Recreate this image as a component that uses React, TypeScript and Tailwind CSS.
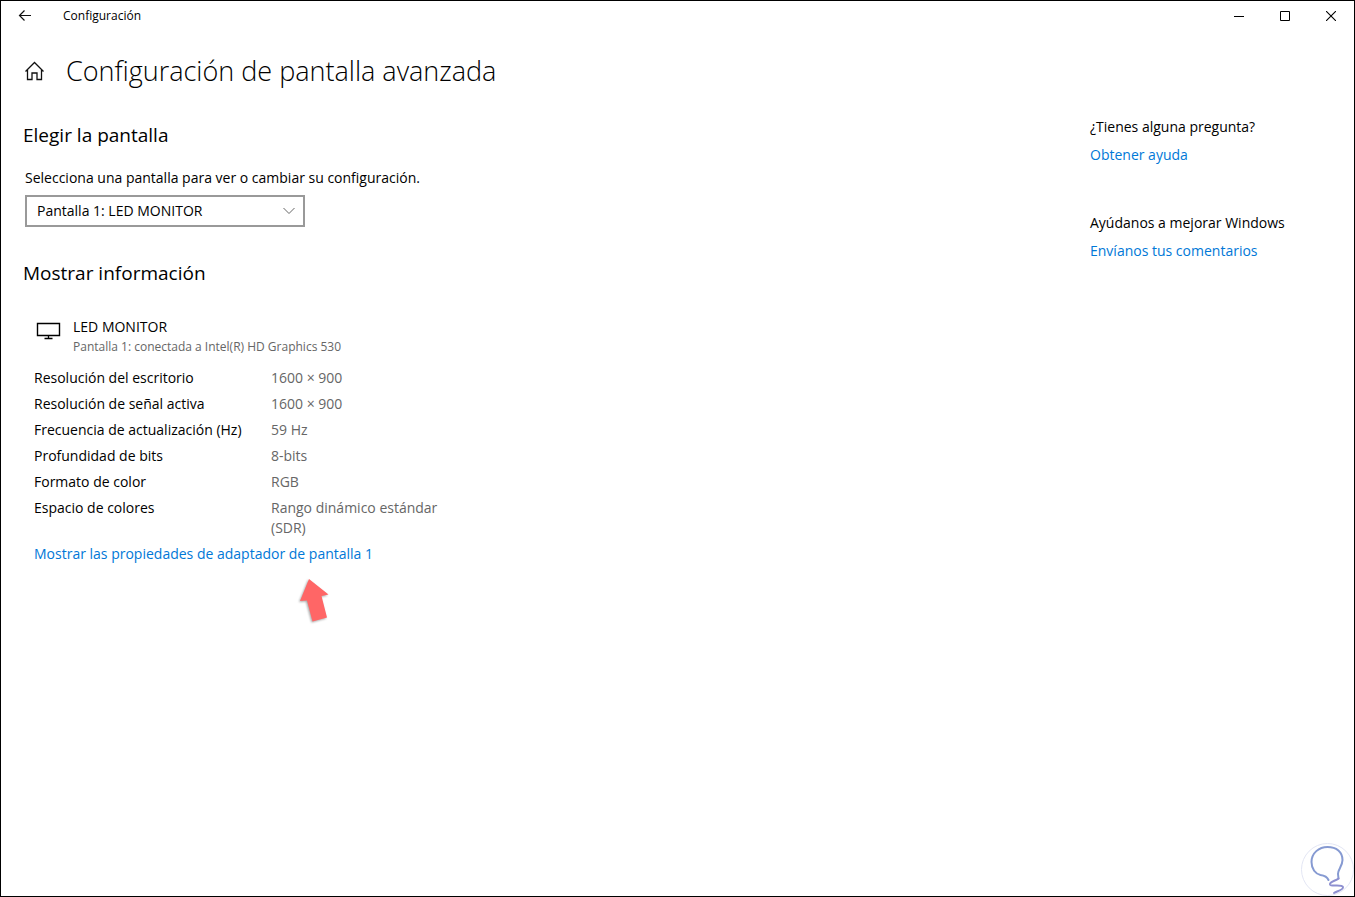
import { useState } from "react";

const DISPLAY_INFO = [
  { label: "Resolución del escritorio", value: "1600 × 900" },
  { label: "Resolución de señal activa", value: "1600 × 900" },
  { label: "Frecuencia de actualización (Hz)", value: "59 Hz" },
  { label: "Profundidad de bits", value: "8-bits" },
  { label: "Formato de color", value: "RGB" },
  { label: "Espacio de colores", value: "Rango dinámico estándar (SDR)" },
];

const LINK = "text-[#0078d7] hover:text-gray-500";

function TitleBar() {
  return (
    <header className="flex h-[30px] items-center justify-between">
      <div className="flex h-full items-center">
        <button type="button" aria-label="Atrás" className="flex h-full w-12 items-center justify-center">
          <svg width="14" height="12" viewBox="0 0 14 12" fill="none" stroke="#111" strokeWidth="1.2">
            <path d="M13 5.5H1.5M6.5.5l-5 5 5 5" />
          </svg>
        </button>
        <span className="ml-3.5 text-xs">Configuración</span>
      </div>
      <div className="flex h-full">
        <button type="button" aria-label="Minimizar" className="flex h-full w-[46px] items-center justify-center">
          <svg width="10" height="10" viewBox="0 0 10 10" stroke="#000">
            <path d="M0 5.5h10" />
          </svg>
        </button>
        <button type="button" aria-label="Maximizar" className="flex h-full w-[46px] items-center justify-center">
          <svg width="10" height="10" viewBox="0 0 10 10" fill="none" stroke="#000">
            <path d="M.5.5h9v9h-9z" />
          </svg>
        </button>
        <button type="button" aria-label="Cerrar" className="flex h-full w-[46px] items-center justify-center">
          <svg width="10" height="10" viewBox="0 0 10 10" stroke="#000" strokeWidth="1.1">
            <path d="M0 0l10 10M10 0L0 10" />
          </svg>
        </button>
      </div>
    </header>
  );
}

function DisplaySelect() {
  const [display, setDisplay] = useState("1");

  return (
    <div className="pl-0.5">
      <label htmlFor="display" className="block leading-5">
        Selecciona una pantalla para ver o cambiar su configuración.
      </label>
      <div className="relative mt-[7px] w-[280px]">
        <select
          id="display"
          value={display}
          onChange={(e) => setDisplay(e.target.value)}
          className="block h-8 w-full appearance-none border-2 border-[#999] bg-white pl-2.5 pr-8"
        >
          <option value="1">Pantalla 1: LED MONITOR</option>
        </select>
        <svg
          className="pointer-events-none absolute right-2.5 top-3"
          width="12"
          height="8"
          viewBox="0 0 12 8"
          fill="none"
          stroke="#666"
        >
          <path d="M.5 1L6 6.5 11.5 1" />
        </svg>
      </div>
    </div>
  );
}

function DisplayInfo() {
  return (
    <div className="pl-[11px]">
      <div className="flex gap-3 pl-0.5">
        <svg className="mt-1" width="25" height="20" viewBox="0 0 25 20" fill="none" stroke="#000">
          <path d="M1.500 2.500h22v12h-22z" strokeWidth="1.4" />
          <path d="M12.500 14.500v3M8.500 17.500h8" strokeWidth="1.3" />
        </svg>
        <div>
          <div className="leading-5">LED MONITOR</div>
          <div className="text-xs leading-5 text-[#666]">
            Pantalla 1: conectada a Intel(R) HD Graphics 530
          </div>
        </div>
      </div>

      <table className="mt-[11px] w-[430px] table-fixed text-left">
        <tbody>
          {DISPLAY_INFO.map((row) => (
            <tr key={row.label} className="align-top leading-5">
              <th scope="row" className="w-[237px] pb-1.5 font-normal">{row.label}</th>
              <td className="pb-1.5 text-[#666]">{row.value}</td>
            </tr>
          ))}
        </tbody>
      </table>

      <a href="#adapter" className={`block w-fit leading-5 ${LINK}`}>
        Mostrar las propiedades de adaptador de pantalla 1
      </a>

      {/* Pointer to the adapter link */}
      <svg
        className="ml-64 mt-2 drop-shadow-[-1px_1px_1px_rgba(0,0,0,0.35)]"
        width="48"
        height="56"
        viewBox="0 0 48 56"
      >
        <path d="M19 7L38.500 22.500l-7 1.500 5.500 21.500-14.500 4-5.500-21-7 .5z" fill="#ff6666" />
      </svg>
    </div>
  );
}

function HelpPanel() {
  return (
    <aside className="w-[264px] shrink-0 leading-5">
      <p>¿Tienes alguna pregunta?</p>
      <a href="#help" className={`mt-2 block w-fit ${LINK}`}>Obtener ayuda</a>
      <p className="mt-12">Ayúdanos a mejorar Windows</p>
      <a href="#feedback" className={`mt-2 block w-fit ${LINK}`}>Envíanos tus comentarios</a>
    </aside>
  );
}

function BulbMark() {
  return (
    <svg className="absolute bottom-0 right-0" width="53" height="53" viewBox="0 0 53 53" fill="none">
      <circle cx="26.500" cy="26.500" r="26" fill="#fff" stroke="#e3e6f4" />
      <g stroke="#869ad2" strokeWidth="2" strokeLinecap="round">
        <path d="M27.500 37c-1.500-3.500-4-4.500-8-5-5-1-9-6-9-13C10.500 10 18 4 26.500 4c9 0 15 5 15 13 0 6-4.500 9-4.500 14l.5 4.500" />
        <path d="M37.500 35.500c-3 2.500-9 3-8.500 6 .5 2.500 12-.5 13 2.500.5 3-6 4-9 6" stroke="#8d8fd0" />
      </g>
    </svg>
  );
}

export default function App() {
  return (
    <div className="relative min-h-screen border border-black bg-white font-['Open_Sans','Noto_Sans',sans-serif] text-sm text-black">
      <TitleBar />

      <div className="mt-5 flex items-center gap-5 pl-6">
        <a href="#home" aria-label="Inicio">
          <svg width="21" height="20" viewBox="0 0 21 20" fill="none" stroke="#111" strokeWidth="1.3">
            <path d="M.5 10.500l9-9 9 9M2.500 9v9.500H7v-6.500h5v6.500h4.500V9" />
          </svg>
        </a>
        <h1 className="text-[27px] font-light leading-10">Configuración de pantalla avanzada</h1>
      </div>

      <div className="mt-[26px] flex justify-between gap-8 pl-[22px]">
        <main>
          <h2 className="mt-1 text-[19px] leading-7">Elegir la pantalla</h2>
          <div className="mt-[19px]">
            <DisplaySelect />
          </div>
          <h2 className="mt-8 text-[19px] leading-7">Mostrar información</h2>
          <div className="mt-[30px]">
            <DisplayInfo />
          </div>
        </main>
        <HelpPanel />
      </div>

      <BulbMark />
    </div>
  );
}
